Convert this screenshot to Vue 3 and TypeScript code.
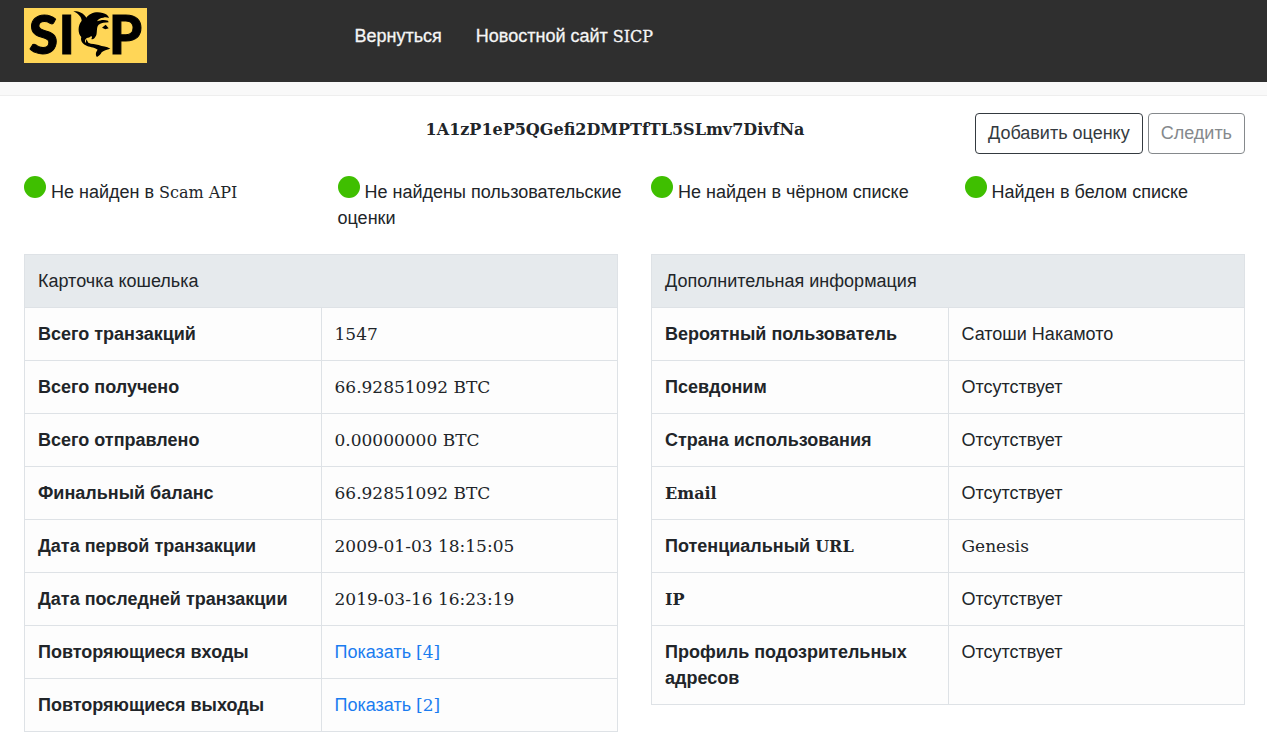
<script setup lang="ts">
import { h, type FunctionalComponent } from 'vue'

interface Row {
  label: string
  value: string
  link?: boolean
}

interface Card {
  title: string
  rows: Row[]
}

// Latin letters, digits and brackets are set in the slab face, Cyrillic in the sans one.
const MixedText: FunctionalComponent<{ text: string }> = (props) =>
  h(
    'span',
    props.text
      .split(/([A-Za-z0-9[\]][A-Za-z0-9[\].:\- ]*)/)
      .filter((part) => part !== '')
      .map((part) => (/^[A-Za-z0-9[\]]/.test(part) ? h('span', { class: 'latin' }, part) : part)),
  )
MixedText.props = ['text']

const address = '1A1zP1eP5QGefi2DMPTfTL5SLmv7DivfNa'

const statuses: string[] = [
  'Не найден в Scam API',
  'Не найдены пользовательские оценки',
  'Не найден в чёрном списке',
  'Найден в белом списке',
]

const cards: Card[] = [
  {
    title: 'Карточка кошелька',
    rows: [
      { label: 'Всего транзакций', value: '1547' },
      { label: 'Всего получено', value: '66.92851092 BTC' },
      { label: 'Всего отправлено', value: '0.00000000 BTC' },
      { label: 'Финальный баланс', value: '66.92851092 BTC' },
      { label: 'Дата первой транзакции', value: '2009-01-03 18:15:05' },
      { label: 'Дата последней транзакции', value: '2019-03-16 16:23:19' },
      { label: 'Повторяющиеся входы', value: 'Показать [4]', link: true },
      { label: 'Повторяющиеся выходы', value: 'Показать [2]', link: true },
    ],
  },
  {
    title: 'Дополнительная информация',
    rows: [
      { label: 'Вероятный пользователь', value: 'Сатоши Накамото' },
      { label: 'Псевдоним', value: 'Отсутствует' },
      { label: 'Страна использования', value: 'Отсутствует' },
      { label: 'Email', value: 'Отсутствует' },
      { label: 'Потенциальный URL', value: 'Genesis' },
      { label: 'IP', value: 'Отсутствует' },
      { label: 'Профиль подозрительных адресов', value: 'Отсутствует' },
    ],
  },
]
</script>

<template>
  <div class="page">
    <header class="header">
      <a class="logo" href="#" aria-label="SICP">
        <svg viewBox="0 0 369 165" width="123" height="55">
          <rect width="369" height="165" fill="#ffd657" />
          <g class="logo-text">
            <text x="15" y="139">S</text>
            <text x="104" y="139">I</text>
            <text x="255" y="139">P</text>
          </g>
          <path
            d="M148 10C162 9 178 14 187 29C196 15 218 9 236 15C246 17 253 22 255 30C248 27 243 27 238 29C230 29 223 33 219 40C229 36 241 34 252 38L254 43C243 43 232 45 224 50C217 57 220 70 217 81C213 91 206 96 202 93C206 87 204 83 199 86C194 90 189 88 186 92C182 96 182 101 185 105L187 94L193 104C203 109 214 107 224 111C236 116 248 115 259 122C249 126 238 127 233 133C230 139 225 144 219 147C213 140 216 131 221 125C208 116 196 119 185 112C173 105 169 96 172 87C161 76 161 52 173 38C172 28 165 18 148 10Z"
          />
          <path d="M234 59L245 50L254 61L244 64Z" />
        </svg>
      </a>
      <nav class="nav">
        <a href="#">Вернуться</a>
        <a href="#"><MixedText text="Новостной сайт SICP" /></a>
      </nav>
    </header>
    <div class="strip"></div>

    <main class="content">
      <div class="top">
        <h1 class="address">{{ address }}</h1>
        <div class="actions">
          <button type="button" class="btn">Добавить оценку</button>
          <button type="button" class="btn" disabled>Следить</button>
        </div>
      </div>

      <div class="statuses">
        <div v-for="status in statuses" :key="status" class="status">
          <span class="dot"></span><MixedText :text="status" />
        </div>
      </div>

      <div class="cards">
        <table v-for="card in cards" :key="card.title">
          <thead>
            <tr>
              <th colspan="2" scope="colgroup">{{ card.title }}</th>
            </tr>
          </thead>
          <tbody>
            <tr v-for="row in card.rows" :key="row.label">
              <th scope="row"><MixedText :text="row.label" /></th>
              <td>
                <a v-if="row.link" href="#"><MixedText :text="row.value" /></a>
                <MixedText v-else :text="row.value" />
              </td>
            </tr>
          </tbody>
        </table>
      </div>
    </main>
  </div>
</template>

<style>
body {
  margin: 0;
  background: #fff;
}

.latin {
  font-family: 'DejaVu Serif', serif;
  font-size: 16px;
  line-height: 1;
}

td .latin {
  font-size: 17px;
}
</style>

<style scoped>
.page {
  color: #212529;
  font: 18px/26px 'Liberation Sans', Arial, sans-serif;
}

.header {
  display: grid;
  grid-template-columns: repeat(4, 1fr);
  column-gap: 33px;
  padding: 8px 22px 19px 24px;
  background: #2f2f2f;
}

.logo,
.logo svg {
  display: block;
  overflow: visible;
}

.logo {
  width: max-content;
}

.logo-text {
  font: 900 158px Lato, sans-serif;
  stroke: #000;
  stroke-width: 3px;
}

.nav {
  grid-column: 2 / -1;
  display: flex;
  align-items: center;
  gap: 34px;
  padding-left: 17px;
}

.nav a {
  color: #f5f5f5;
  text-decoration: none;
  -webkit-text-stroke: 0.3px #f5f5f5;
}

.strip {
  height: 13px;
  background: #f9f9f9;
  border-bottom: 1px solid #eee;
}

.content {
  padding: 17px 22px 11px 24px;
}

.top {
  display: flex;
  align-items: flex-start;
}

.address {
  flex: 1;
  margin: 0;
  padding: 4px 0 0 231px;
  font: bold 16px/26px 'DejaVu Serif', serif;
  text-align: center;
}

.actions {
  display: flex;
  gap: 5px;
}

.btn {
  padding: 6px 12px;
  border: 1px solid #343a40;
  border-radius: 4px;
  background: #fff;
  color: #343a40;
  font: inherit;
  line-height: 27px;
}

.btn:disabled {
  border-color: #85898c;
  color: #85898c;
}

.statuses {
  display: grid;
  grid-template-columns: repeat(4, 1fr);
  margin: 22px -33px 0 0;
}

.status {
  padding-right: 22px;
}

.dot {
  display: inline-block;
  width: 22px;
  height: 22px;
  margin-right: 5px;
  border-radius: 50%;
  background: #3fbf00;
}

.cards {
  display: grid;
  grid-template-columns: repeat(2, 1fr);
  align-items: start;
  column-gap: 33px;
  margin-top: 23px;
}

table {
  width: 100%;
  table-layout: fixed;
  border-collapse: collapse;
  background: #fdfdfd;
}

th,
td {
  padding: 13px;
  border: 1px solid #dee2e6;
  text-align: left;
  vertical-align: top;
}

thead th {
  background: #e6eaed;
  font-weight: normal;
}

td a {
  color: #1a7cf0;
  text-decoration: none;
}
</style>
